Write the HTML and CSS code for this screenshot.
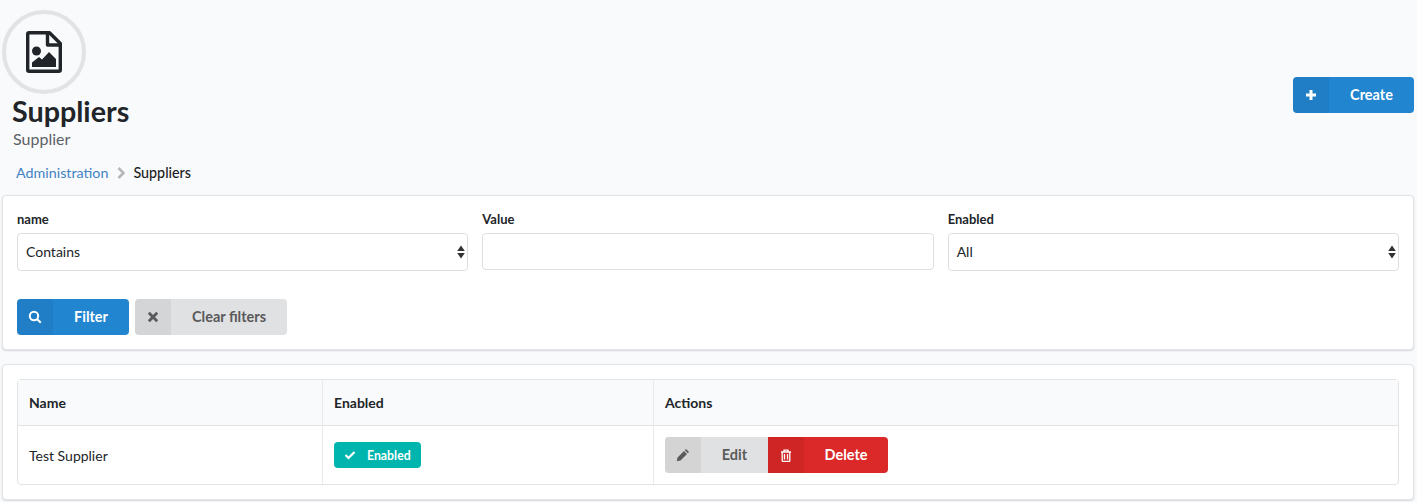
FILE: index.html
```html
<!DOCTYPE html>
<html lang="en">
<head>
<meta charset="UTF-8">
<title>Suppliers</title>
<link rel="stylesheet" href="styles.css">
</head>
<body>

<div class="page-header">
    <div class="page-title">
        <div class="circle-icon">
            <svg width="36" height="42" viewBox="0 0 36 42">
                <path class="file-outline" d="M1.700 3.200A1.500 1.500 0 0 1 3.200 1.700H23.500L34.300 12.500V38.800A1.500 1.500 0 0 1 32.800 40.300H3.200A1.500 1.500 0 0 1 1.700 38.800Z"/>
                <path class="file-fold" d="M21.500 1.700V14H34.300"/>
                <circle cx="10.500" cy="20" r="4.500"/>
                <path d="M6 36V31.500L13 26L16 28.500L23 21L30 28V36Z"/>
            </svg>
        </div>
        <h1>Suppliers</h1>
        <div class="sub-header">Supplier</div>
    </div>
    <a class="btn btn-blue btn-create" href="#"><span class="btn-icon">
        <svg width="12" height="12" viewBox="0 0 12 12"><path d="M4.500 1h3v3.500H11v3H7.500V11h-3V7.500H1v-3h3.500z"/></svg>
    </span><span class="btn-text">Create</span></a>
</div>

<div class="breadcrumb">
    <a href="#">Administration</a>
    <svg class="crumb-sep" width="8" height="12" viewBox="0 0 8 12"><path d="M1.500 1L6.500 6L1.500 11"/></svg>
    <b>Suppliers</b>
</div>

<div class="card filter-card">
    <div class="filter-row">
        <div class="field">
            <label>name</label>
            <div class="select-box">Contains<svg class="updown" width="8" height="14" viewBox="0 0 8 14"><path d="M4 0.500L7.800 6H0.200ZM4 13.500L0.200 8H7.800Z"/></svg></div>
        </div>
        <div class="field">
            <label>Value</label>
            <input type="text" class="text-box">
        </div>
        <div class="field">
            <label>Enabled</label>
            <div class="select-box">All<svg class="updown" width="8" height="14" viewBox="0 0 8 14"><path d="M4 0.500L7.800 6H0.200ZM4 13.500L0.200 8H7.800Z"/></svg></div>
        </div>
    </div>
    <div class="filter-actions">
        <a class="btn btn-blue btn-filter" href="#"><span class="btn-icon">
            <svg class="stroke-icon" width="14" height="14" viewBox="0 0 14 14"><circle cx="6" cy="6" r="4.200"/><path d="M9.200 9.200L12.800 12.800"/></svg>
        </span><span class="btn-text">Filter</span></a>
        <a class="btn btn-grey btn-clear" href="#"><span class="btn-icon">
            <svg width="12" height="12" viewBox="0 0 12 12"><path d="M2.800 0.800L6 4L9.200 0.800L11.200 2.800L8 6L11.200 9.200L9.200 11.200L6 8L2.800 11.200L0.800 9.200L4 6L0.800 2.800Z"/></svg>
        </span><span class="btn-text">Clear filters</span></a>
    </div>
</div>

<div class="card table-card">
    <table class="data-table">
        <thead>
            <tr>
                <th class="col-name">Name</th>
                <th class="col-enabled">Enabled</th>
                <th>Actions</th>
            </tr>
        </thead>
        <tbody>
            <tr>
                <td>Test Supplier</td>
                <td>
                    <span class="status-label">
                        <svg width="12" height="10" viewBox="0 0 12 10"><path d="M1.500 5L4.500 8L10.500 2"/></svg>
                        Enabled
                    </span>
                </td>
                <td>
                    <div class="action-group">
                        <a class="btn btn-grey btn-edit" href="#"><span class="btn-icon">
                            <svg width="14" height="14" viewBox="0 0 14 14"><path d="M10 1L13 4L11.800 5.200L8.800 2.200ZM8 3L11 6L4.500 12.500L0.800 13.200L1.500 9.500Z"/></svg>
                        </span><span class="btn-text">Edit</span></a>
                        <a class="btn btn-red btn-delete" href="#"><span class="btn-icon">
                            <svg width="12" height="13" viewBox="0 0 12 13"><path class="trash" d="M1 3H11M2.200 3V11.500A1 1 0 0 0 3.200 12.500H8.800A1 1 0 0 0 9.800 11.500V3M4 3V1.200H8V3M4.500 5V10.500M7.500 5V10.500"/></svg>
                        </span><span class="btn-text">Delete</span></a>
                    </div>
                </td>
            </tr>
        </tbody>
    </table>
</div>

</body>
</html>
```

FILE: styles.css
```css
html, body {
    height: 100%;
}
body {
    margin: 0;
    padding: 10px 3px 0 2px;
    box-sizing: border-box;
    overflow: hidden;
    background-color: #f9fafc;
    color: #212529;
    font-family: Lato, "Liberation Sans", sans-serif;
    font-size: 14px;
}
a {
    text-decoration: none;
}

/* Header */
.page-header {
    display: flex;
    justify-content: space-between;
    align-items: flex-start;
}
.circle-icon {
    width: 84px;
    height: 84px;
    box-sizing: border-box;
    border: 4px solid #e2e3e4;
    border-radius: 50%;
    display: flex;
    align-items: center;
    justify-content: center;
}
.circle-icon svg {
    fill: #212529;
}
.file-outline, .file-fold {
    fill: none;
    stroke: #212529;
    stroke-width: 3.400;
    stroke-linejoin: round;
}
h1 {
    margin: 0 0 0 10px;
    font-size: 28.700px;
    line-height: 34px;
    font-weight: 700;
}
.sub-header {
    margin: 1px 0 0 11px;
    font-size: 16px;
    line-height: 20px;
    color: #5c6166;
}
.breadcrumb {
    display: flex;
    align-items: center;
    margin: 15px 0 0 14px;
    line-height: 18px;
    font-size: 14.300px;
}
.breadcrumb a {
    color: #4183c4;
}
.breadcrumb b {
    font-weight: 500;
    color: #1b1c1d;
}
.crumb-sep {
    margin: 0 8px 0 9px;
    fill: none;
    stroke: #b5b6b8;
    stroke-width: 2.500;
}

/* Buttons */
.btn {
    display: inline-flex;
    height: 36px;
    border-radius: 4px;
    overflow: hidden;
    font-weight: 700;
    font-size: 14.500px;
    line-height: 36px;
}
.btn-icon {
    width: 36px;
    flex: none;
    display: flex;
    align-items: center;
    justify-content: center;
    background-color: rgba(0, 0, 0, 0.05);
}
.btn-text {
    flex: 1;
    text-align: center;
}
.btn-blue {
    background-color: #2185d0;
    color: #fff;
    fill: #fff;
}
.btn-grey {
    background-color: #e0e1e2;
    color: #5a5a5b;
    fill: #5a5a5b;
}
.btn-red {
    background-color: #db2828;
    color: #fff;
}
.btn-create {
    width: 121px;
    margin: 67px 0 0 0;
}
.btn-filter {
    width: 112px;
}
.btn-clear {
    width: 152px;
}
.stroke-icon {
    fill: none;
    stroke: #fff;
    stroke-width: 2;
}

/* Cards */
.card {
    background-color: #fff;
    border-radius: 4px;
    border: 1px solid #e2e3e4;
    box-shadow: 0 1px 2px rgba(34, 36, 38, 0.15);
    padding: 14px;
}
.filter-card {
    margin-top: 13px;
    height: 155px;
    box-sizing: border-box;
    padding-top: 15px;
}
.table-card {
    margin-top: 14px;
    height: 136px;
    box-sizing: border-box;
}

/* Filter form */
.filter-row {
    display: grid;
    grid-template-columns: repeat(3, 1fr);
    column-gap: 14px;
}
.field label {
    display: block;
    font-size: 13px;
    font-weight: 700;
    line-height: 16px;
    margin-bottom: 6px;
    color: #212529;
}
.select-box {
    position: relative;
    height: 38px;
    box-sizing: border-box;
    border: 1px solid #dedfe0;
    border-radius: 4px;
    padding: 0 8px;
    line-height: 36px;
    color: #212529;
}
.updown {
    position: absolute;
    right: 2px;
    top: 11px;
    fill: #333;
}
.text-box {
    display: block;
    width: 100%;
    height: 37px;
    box-sizing: border-box;
    border: 1px solid #dedfe0;
    border-radius: 4px;
    outline: none;
}
.filter-actions {
    display: flex;
    gap: 6px;
    margin-top: 28px;
}

/* Table */
.data-table {
    width: 100%;
    height: 106px;
    border-collapse: separate;
    border-spacing: 0;
    border: 1px solid #e2e3e4;
    border-radius: 4px;
    table-layout: fixed;
}
.data-table th {
    height: 46px;
    box-sizing: border-box;
    background-color: #f9fafb;
    border-bottom: 1px solid #e2e3e4;
    text-align: left;
    font-weight: 700;
    padding: 0 11px;
}
.data-table td {
    padding: 0 11px;
}
.data-table th + th, .data-table td + td {
    border-left: 1px solid #e9eaeb;
}
.col-name {
    width: 304px;
}
.col-enabled {
    width: 331px;
}
.status-label {
    display: inline-flex;
    align-items: center;
    gap: 11px;
    height: 26px;
    padding: 0 10px 0 10px;
    background-color: #00b5ad;
    border-radius: 4px;
    color: #fff;
    font-size: 12.300px;
    font-weight: 700;
}
.status-label svg {
    fill: none;
    stroke: #fff;
    stroke-width: 2.200;
}
.action-group {
    display: flex;
}
.btn-edit {
    width: 103px;
    border-radius: 4px 0 0 4px;
}
.btn-edit .btn-icon {
    background-color: #d4d4d5;
}
.btn-delete {
    width: 120px;
    border-radius: 0 4px 4px 0;
}
.trash {
    fill: none;
    stroke: #fff;
    stroke-width: 1.300;
}
```
